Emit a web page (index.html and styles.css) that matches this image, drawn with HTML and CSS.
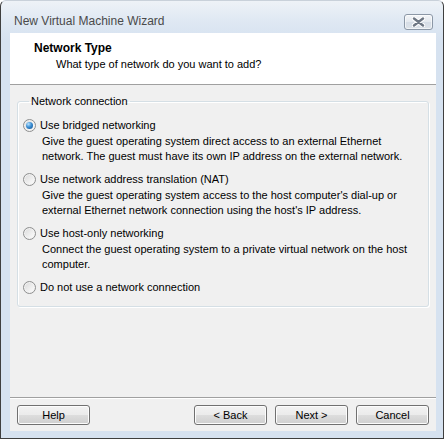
FILE: index.html
```html
<!DOCTYPE html>
<html>
<head>
<meta charset="utf-8">
<link rel="stylesheet" href="styles.css">
</head>
<body>
<div class="window">
  <div class="titlebar">
    <span class="title">New Virtual Machine Wizard</span>
    <button class="close" aria-label="Close">
      <svg width="13" height="10" viewBox="0 0 13 10">
        <path d="M2 1.5 L11 8.5 M11 1.5 L2 8.5" stroke="#ffffff" stroke-width="4.6" stroke-linecap="round"/>
        <path d="M2 1.5 L11 8.5 M11 1.5 L2 8.5" stroke="#6e7784" stroke-width="2.4" stroke-linecap="round"/>
      </svg>
    </button>
  </div>
  <div class="client">
    <div class="header">
      <div class="h-title">Network Type</div>
      <div class="h-sub">What type of network do you want to add?</div>
    </div>
    <div class="body">
      <fieldset class="group">
        <legend class="legend">Network connection</legend>
        <div class="opt">
          <div class="opt-row"><span class="radio checked"></span><span>Use bridged networking</span></div>
          <div class="desc">Give the guest operating system direct access to an external Ethernet<br>network. The guest must have its own IP address on the external network.</div>
        </div>
        <div class="opt">
          <div class="opt-row"><span class="radio"></span><span>Use network address translation (NAT)</span></div>
          <div class="desc">Give the guest operating system access to the host computer's dial-up or<br>external Ethernet network connection using the host's IP address.</div>
        </div>
        <div class="opt">
          <div class="opt-row"><span class="radio"></span><span>Use host-only networking</span></div>
          <div class="desc">Connect the guest operating system to a private virtual network on the host<br>computer.</div>
        </div>
        <div class="opt last">
          <div class="opt-row"><span class="radio"></span><span>Do not use a network connection</span></div>
        </div>
      </fieldset>
    </div>
    <div class="footer">
      <button class="btn">Help</button>
      <div class="spacer"></div>
      <button class="btn">&lt; Back</button>
      <button class="btn">Next &gt;</button>
      <button class="btn">Cancel</button>
    </div>
  </div>
</div>
</body>
</html>
```

FILE: styles.css
```css
html, body {
  margin: 0;
  padding: 0;
  background: #ffffff;
}
body {
  font-family: "Liberation Sans", Arial, sans-serif;
  font-size: 11px;
  color: #000;
}
.window {
  width: 442px;
  height: 437px;
  border: 1px solid #3f3f3f;
  border-top: 1px solid #c9d1da;
  border-radius: 6px 6px 0 0;
  background: linear-gradient(#eef2f7 0px, #dfe8f3 20px, #d6e2f0 40px, #d6e2f0 100%);
  display: flex;
  flex-direction: column;
  box-sizing: content-box;
}
.titlebar {
  height: 32px;
  display: flex;
  align-items: flex-start;
  padding: 0 10px 0 13px;
}
.title {
  margin-top: 12px;
  line-height: 16px;
  font-size: 12px;
  color: #4a4a4a;
  flex: 1;
}
.close {
  margin-top: 13px;
  width: 29px;
  height: 16px;
  padding: 0;
  border: 1px solid #8b97a6;
  border-radius: 3px;
  background: linear-gradient(#f3f5f8, #e4e9ef 50%, #d6dde6 51%, #dde3ea);
  display: flex;
  align-items: center;
  justify-content: center;
  box-shadow: inset 0 0 0 1px rgba(255,255,255,0.6);
}
.client {
  margin: 0 7px 0 9px;
  height: 398px;
  background: #f0f0f0;
  display: flex;
  flex-direction: column;
}
.header {
  background: #ffffff;
  height: 51px;
  border-bottom: 1px solid #a0a0a0;
  box-sizing: content-box;
}
.h-title {
  font-weight: bold;
  font-size: 12px;
  line-height: 15px;
  margin: 8px 0 0 24px;
}
.h-sub {
  line-height: 15px;
  margin: 1px 0 0 46px;
}
.body {
  flex: 1;
  padding: 9px 7px 0 7px;
  border-bottom: 1px solid #a0a0a0;
  box-shadow: 0 1px 0 #ffffff;
}
.group {
  margin: 0;
  padding: 10px 5px 11px 5px;
  border: 1px solid #d5dfe5;
  border-radius: 3px;
  box-shadow: inset 1px 1px 0 #ffffff, 1px 1px 0 #ffffff;
  min-width: 0;
}
.legend {
  padding: 0 2px;
  margin-left: 6px;
  line-height: 14px;
}
.opt {
  margin-bottom: 8px;
}
.opt.last {
  margin-top: 3px;
  margin-bottom: 0;
}
.opt-row {
  display: flex;
  align-items: center;
  height: 15px;
  line-height: 15px;
}
.radio {
  position: relative;
  width: 11px;
  height: 11px;
  border: 1px solid #8e8f8f;
  border-radius: 50%;
  background: linear-gradient(135deg, #d9d9d9, #f4f4f4 70%, #ffffff);
  margin-right: 4px;
  flex: none;
  box-shadow: inset 0 0 0 1px #f2f2f2;
}
.radio.checked::after {
  content: "";
  position: absolute;
  left: 2px;
  top: 2px;
  width: 7px;
  height: 7px;
  border-radius: 50%;
  background: radial-gradient(circle at 35% 30%, #b8e3ff 0, #3c8fd4 45%, #0d4d8c 100%);
}
.desc {
  margin: 1px 0 0 19px;
  line-height: 15px;
}
.footer {
  height: 33px;
  display: flex;
  align-items: flex-start;
  gap: 8px;
  padding: 7px 7px 0 7px;
  box-sizing: border-box;
}
.spacer {
  flex: 1;
}
.btn {
  width: 73px;
  height: 20px;
  padding: 0;
  font-family: "Liberation Sans", Arial, sans-serif;
  font-size: 11px;
  color: #000;
  border: 1px solid #707070;
  border-radius: 3px;
  background: linear-gradient(#f2f2f2 0%, #ebebeb 50%, #dddddd 51%, #cfcfcf 100%);
  box-shadow: inset 0 0 0 1px #fcfcfc;
}
```
